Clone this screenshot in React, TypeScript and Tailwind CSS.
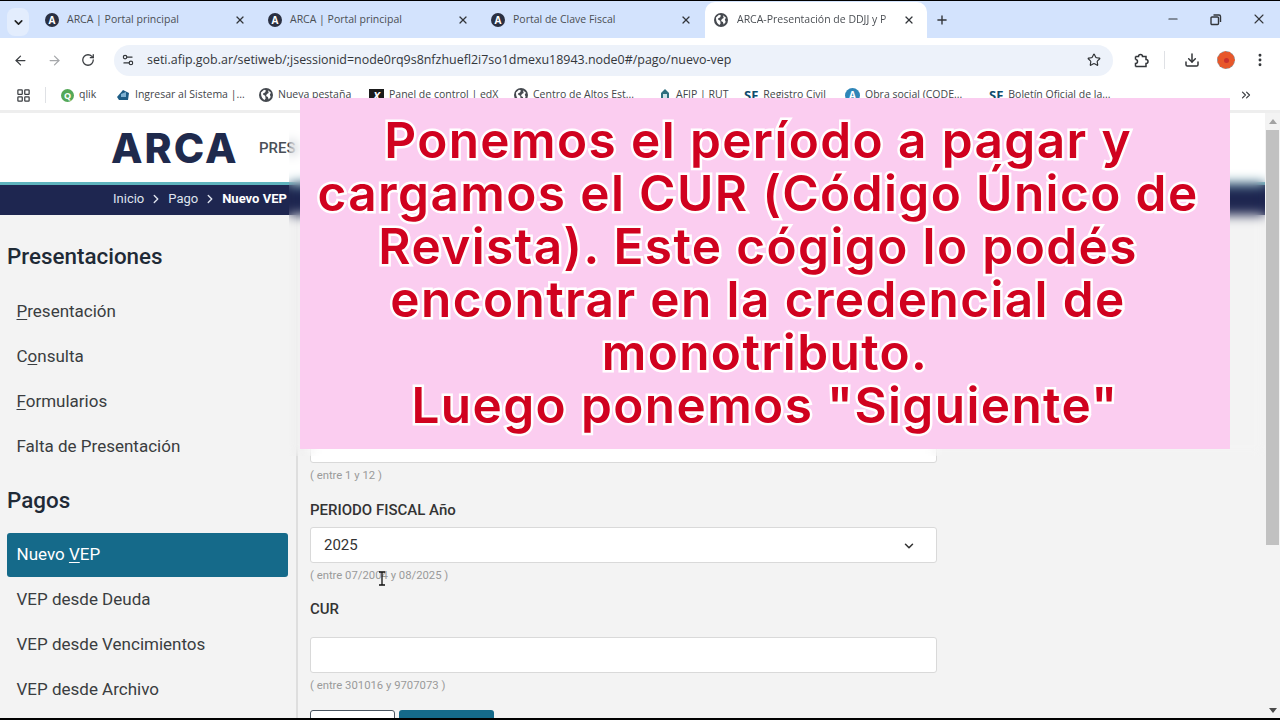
import React from "react";
import {
  ArrowLeft,
  ArrowRight,
  ChevronDown,
  ChevronRight,
  ChevronsRight,
  Download,
  EllipsisVertical,
  LayoutGrid,
  Minus,
  Plus,
  RotateCw,
  Settings2,
  Star,
  X,
} from "lucide-react";

const roboto = "font-['Roboto',sans-serif]";
const chromeFont = "font-['Open_Sans','Noto_Sans',sans-serif]";

const ArcaFav = () => (
  <span className="flex h-[14px] w-[14px] shrink-0 items-center justify-center rounded-full bg-[#2a3042] text-[10px] font-bold leading-none text-white">
    A
  </span>
);

const GlobeFav = () => (
  <svg width="14" height="14" viewBox="0 0 14 14" className="shrink-0">
    <circle cx="7" cy="7" r="7" fill="#45494f" />
    <path d="M2 4.5L5 1.8l2 .8-1 1.8-1.8.8v1.6l2 1 .4 2.6-1 1.6C3.5 11 2 9 2 4.5z" fill="#fff" />
    <path d="M9 2.2l3 2.6-1.2 1.6.9 2.6-2 2.6-.8-2.7-1.9-1 .9-2 1.8-.8z" fill="#fff" />
  </svg>
);

const Tab = ({ title }: { title: string }) => (
  <div className="flex h-[36px] w-[223px] shrink-0 items-center pl-[15px] pr-[7px]">
    <ArcaFav />
    <span className="ml-2 flex-1 whitespace-nowrap text-[10.5px] text-[#4b4f54]">{title}</span>
    <X size={12} strokeWidth={2.4} className="text-[#33363a]" />
  </div>
);

const ActiveTab = ({ title }: { title: string }) => (
  <div className="ml-[6px] flex h-[36px] w-[222px] shrink-0 items-center rounded-t-[10px] bg-white pl-[9px] pr-[12px]">
    <GlobeFav />
    <span className="ml-[9px] flex-1 whitespace-nowrap text-[10.5px] text-[#4b4f54] [mask-image:linear-gradient(to_right,black_88%,transparent_99%)]">
      {title}
    </span>
    <X size={12} strokeWidth={2.4} className="text-[#33363a]" />
  </div>
);

const Bookmark = ({ icon, label, w }: { icon: React.ReactNode; label: string; w: string }) => (
  <div className={`flex shrink-0 items-center gap-[5px] whitespace-nowrap text-[10.5px] text-[#43464a] ${w}`}>
    {icon}
    <span>{label}</span>
  </div>
);

const SfIcon = () => <span className="text-[13px] font-bold leading-none text-[#0f4c6e]">SF</span>;

const SideItem = ({ before = "", u, after }: { before?: string; u?: string; after: string }) => (
  <div className="flex h-[45px] items-center pl-[16.5px] text-[17px] text-[#3a3d40]">
    <span>
      {before}
      {u && <span className="underline underline-offset-2">{u}</span>}
      {after}
    </span>
  </div>
);

const Hint = ({ children }: { children: string }) => (
  <p className="mt-[5px] text-[11.3px] leading-[15px] text-[#9a9a9a]">{children}</p>
);

const Field = ({ children }: { children?: React.ReactNode }) => (
  <div className="flex h-[36px] w-[627px] items-center justify-between rounded-[3px] border border-[#d9d9d9] bg-white pl-[13px] pr-[20px] text-[15px] text-[#333]">
    {children}
  </div>
);

export default function App() {
  return (
    <div className={`relative flex h-[720px] w-[1280px] flex-col overflow-hidden bg-white ${roboto}`}>
      <div className="h-px shrink-0 bg-black" />

      {/* tab strip */}
      <div className={`flex h-[37px] shrink-0 items-end bg-[#d3e3fd] ${chromeFont}`}>
        <div className="mb-[2px] ml-[7px] mr-px flex h-[28px] w-[22px] shrink-0 items-center justify-center rounded-[8px] bg-[#e3edfd]">
          <ChevronDown size={13} strokeWidth={3} className="text-[#222]" />
        </div>
        <Tab title="ARCA | Portal principal" />
        <Tab title="ARCA | Portal principal" />
        <Tab title="Portal de Clave Fiscal" />
        <ActiveTab title="ARCA-Presentación de DDJJ y P" />
        <Plus size={14} strokeWidth={2.4} className="mb-[11px] ml-[8px] text-[#33363a]" />
        <div className="mb-[11px] ml-auto flex items-center gap-[29px] pr-[13px] text-[#33363a]">
          <Minus size={14} />
          <svg width="13" height="13" viewBox="0 0 13 13" fill="none" stroke="currentColor" strokeWidth="1.4">
            <rect x="2" y="4" width="7.5" height="7.5" rx="1" />
            <path d="M4.5 2h5.5a1.5 1.5 0 0 1 1.5 1.5V9" />
          </svg>
          <X size={16} strokeWidth={1.6} />
        </div>
      </div>

      {/* toolbar */}
      <div className={`flex h-[44px] shrink-0 items-center bg-white ${chromeFont}`}>
        <ArrowLeft size={15} strokeWidth={2} className="ml-[13px] text-[#3b3e42]" />
        <ArrowRight size={15} strokeWidth={2} className="ml-[19px] text-[#a6a8ab]" />
        <RotateCw size={14} strokeWidth={2.2} className="ml-[19px] text-[#3b3e42]" />
        <div className="ml-[19px] flex h-[31px] w-[999px] items-center rounded-full bg-[#edf2fa] pl-[7px] pr-[12px]">
          <Settings2 size={14} strokeWidth={2} className="text-[#33363a]" />
          <span className="ml-[12px] text-[12.45px] text-[#33363a]">
            seti.afip.gob.ar/setiweb/;jsessionid=node0rq9s8nfzhuefl2i7so1dmexu18943.node0#/pago/nuevo-vep
          </span>
          <Star size={14} strokeWidth={2} className="ml-auto text-[#2f3235]" />
        </div>
        <svg width="16" height="16" viewBox="0 0 16 16" fill="none" stroke="#33363a" strokeWidth="1.5" className="ml-[20px]">
          <path d="M2.5 4.500h3a2 2 0 0 1 4 0h3.500v3a2 2 0 0 1 0 4v3h-3.500M2.500 4.500v3M2.500 14.500h8M2.500 14.500v-3a2 2 0 0 0 0-4" />
        </svg>
        <div className="ml-[15px] h-[18px] w-px bg-[#dfe1e5]" />
        <Download size={16} strokeWidth={2.2} className="ml-[19px] text-[#2f3235]" />
        <span className="ml-[17px] flex h-[18px] w-[18px] items-center justify-center rounded-full border border-dashed border-[#8d8d8d] bg-[#e8572a]">
          <span className="h-[5px] w-[5px] rounded-full bg-[#c9302c]" />
        </span>
        <EllipsisVertical size={16} strokeWidth={2.4} className="ml-[17px] text-[#33363a]" />
      </div>

      {/* bookmarks */}
      <div className={`flex h-[31px] shrink-0 items-center border-b-[3px] border-[#eeeeee] bg-white pb-[2px] ${chromeFont}`}>
        <LayoutGrid size={15} strokeWidth={2} className="ml-[16px] text-[#3b3e42]" />
        <div className="ml-[14px] mr-[15px] h-[16px] w-px bg-[#dfe1e5]" />
        <Bookmark
          w="w-[55px]"
          label="qlik"
          icon={
            <span className="flex h-[13px] w-[13px] items-center justify-center rounded-full bg-[#54a858] text-[9px] font-bold leading-none text-white">
              Q
            </span>
          }
        />
        <Bookmark
          w="w-[143px]"
          label="Ingresar al Sistema |..."
          icon={
            <svg width="14" height="13" viewBox="0 0 14 13">
              <path d="M1 8l6-7 6 3-1 7H3z" fill="#1d5c85" />
              <path d="M5 5l5-2v5H5z" fill="#7fb2d3" />
            </svg>
          }
        />
        <Bookmark w="w-[110px]" label="Nueva pestaña" icon={<GlobeFav />} />
        <Bookmark
          w="w-[145px]"
          label="Panel de control | edX"
          icon={
            <span className="flex h-[13px] w-[15px] items-center justify-center bg-[#1b1b1b] text-[11px] font-bold italic leading-none text-white">
              X
            </span>
          }
        />
        <Bookmark w="w-[145px]" label="Centro de Altos Est..." icon={<GlobeFav />} />
        <Bookmark
          w="w-[85px]"
          label="AFIP | RUT"
          icon={
            <svg width="12" height="14" viewBox="0 0 12 14">
              <path d="M6 1l4 4v7H2V5z" fill="#2f6f7f" />
              <path d="M4 6h4v4H4z" fill="#cfe3e8" />
            </svg>
          }
        />
        <Bookmark w="w-[101px]" label="Registro Civil" icon={<SfIcon />} />
        <Bookmark
          w="w-[144px]"
          label="Obra social (CODE..."
          icon={
            <span className="flex h-[15px] w-[15px] items-center justify-center rounded-full bg-[#2f86b8] text-[10px] font-bold leading-none text-white">
              A
            </span>
          }
        />
        <Bookmark w="w-[130px]" label="Boletín Oficial de la..." icon={<SfIcon />} />
        <ChevronsRight size={14} strokeWidth={2} className="ml-auto mr-[27px] text-[#3b3e42]" />
      </div>

      {/* page */}
      <div className="flex min-h-0 flex-1">
        <div className="flex min-w-0 flex-1 flex-col bg-[#f3f3f3]">
          <header className="flex h-[72px] shrink-0 items-center border-b-[3px] border-[#5fb3bd] bg-white pl-[111px] pt-[2px]">
            <span className="w-[148px] font-['Inter',sans-serif] text-[41px] font-extrabold leading-none tracking-[2px] text-[#1f2a4d]">
              ARCA
            </span>
            <span className="text-[15px] font-medium text-[#4a4f58]">PRES</span>
          </header>
          <nav className="flex h-[30px] shrink-0 items-center bg-[#1e2650] pb-[3px] pl-[113px] text-[13px] text-[#dfe3ee]">
            <span>Inicio</span>
            <ChevronRight size={14} strokeWidth={2.4} className="mx-[5px]" />
            <span>Pago</span>
            <ChevronRight size={14} strokeWidth={2.4} className="mx-[5px]" />
            <span className="font-bold text-white">Nuevo VEP</span>
          </nav>

          <div className="flex min-h-0 flex-1">
            <aside className="w-[298px] shrink-0 border-r-2 border-[#dedede] pl-0 pt-[26px]">
              <h2 className="h-[33px] pl-[7px] text-[22.4px] font-medium leading-[30px] text-[#1f2a36]">
                Presentaciones
              </h2>
              <div className="mt-[15px]">
                <SideItem u="P" after="resentación" />
                <SideItem before="C" u="o" after="nsulta" />
                <SideItem u="F" after="ormularios" />
                <SideItem after="Falta de Presentación" />
              </div>
              <h2 className="mt-[16px] h-[33px] pl-[7px] text-[22.4px] font-medium leading-[30px] text-[#1f2a36]">
                Pagos
              </h2>
              <div className="mt-[15px]">
                <div className="ml-[7px] flex h-[44px] w-[281px] items-center rounded-[3px] bg-[#156a8a] pl-[9.5px] text-[17px] text-white">
                  <span>
                    Nuevo <span className="underline underline-offset-2">V</span>EP
                  </span>
                </div>
                <SideItem after="VEP desde Deuda" />
                <SideItem after="VEP desde Vencimientos" />
                <SideItem after="VEP desde Archivo" />
              </div>
            </aside>

            <main className="flex-1 pl-[12px] pt-[212px]">
              <Field />
              <Hint>( entre 1 y 12 )</Hint>
              <label className="mt-[17px] block h-[20px] text-[15px] font-medium leading-[20px] text-[#333]">
                PERIODO FISCAL Año
              </label>
              <div className="mt-[7px]">
                <Field>
                  <span>2025</span>
                  <ChevronDown size={14} strokeWidth={2.6} className="mt-[2px] text-[#333]" />
                </Field>
              </div>
              <Hint>( entre 07/2004 y 08/2025 )</Hint>
              <label className="mt-[16px] block h-[20px] text-[15px] font-medium leading-[20px] text-[#333]">
                CUR
              </label>
              <div className="mt-[18px]">
                <Field />
              </div>
              <Hint>( entre 301016 y 9707073 )</Hint>
              <div className="mt-[17px] flex gap-[4px]">
                <button className="h-[30px] w-[85px] rounded-[3px] border border-[#4a5560] bg-white" />
                <button className="h-[30px] w-[95px] rounded-[3px] bg-[#156a8a]" />
              </div>
            </main>
          </div>
        </div>

        {/* scrollbar */}
        <div className="flex w-[15px] shrink-0 flex-col bg-[#f3f3f3]">
          <div className="flex h-[17px] items-center justify-center">
            <span className="h-0 w-0 border-x-[4px] border-b-[5px] border-x-transparent border-b-[#a3a3a3]" />
          </div>
          <div className="ml-px h-[415px] w-[13px] bg-[#c1c1c1]" />
          <div className="mt-auto flex h-[15px] items-center justify-center">
            <span className="h-0 w-0 border-x-[4px] border-t-[5px] border-x-transparent border-t-[#4a4a4a]" />
          </div>
        </div>
      </div>

      <div className="h-[2px] shrink-0 bg-black" />

      {/* text cursor over the hint */}
      <svg className="absolute left-[378px] top-[571px]" width="8" height="15" viewBox="0 0 8 15" fill="none" stroke="#111" strokeWidth="1.3">
        <path d="M1 1h6M1 14h6M4 1v13" />
      </svg>

      {/* caption laid over the video; the wrapped lines keep their trailing space */}
      <div className="absolute left-[289px] top-[113px] h-[343px] w-[976px] backdrop-blur-[6px]" />
      <div className="absolute left-[300px] top-[98px] flex h-[351px] w-[930px] items-start justify-center bg-[#fbcdf0] pt-[16px]">
        <p className="whitespace-pre-line text-center font-['Inter',sans-serif] text-[49.5px] font-semibold leading-[53px] tracking-[1.4px] text-[#d0021f] [-webkit-text-stroke:5px_white] [paint-order:stroke_fill]">
          {"Ponemos el período a pagar y\u00a0\ncargamos el CUR (Código Único de\u00a0\nRevista). Este cógigo lo podés\u00a0\nencontrar en la credencial de\u00a0\nmonotributo.\nLuego ponemos \"Siguiente\""}
        </p>
      </div>
    </div>
  );
}
